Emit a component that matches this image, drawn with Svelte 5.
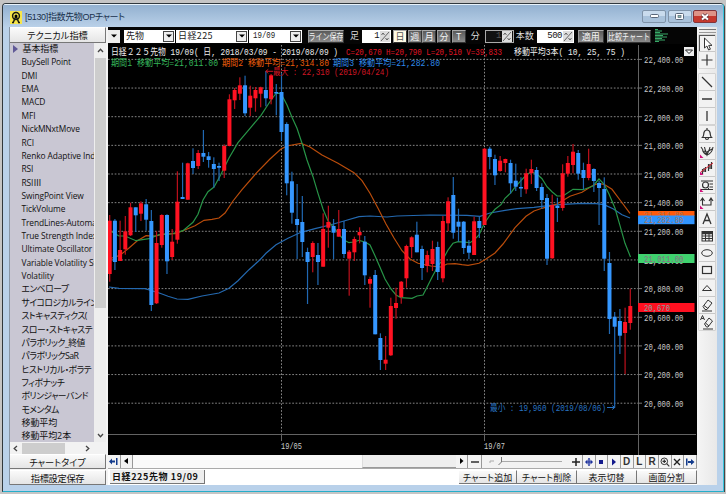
<script lang="ts">
    const indicators = [
        "基本指標", "BuySell Point", "DMI", "EMA", "MACD", "MFI", "NickMNxtMove", "RCI",
        "Renko Adaptive Index", "RSI", "RSIⅢ", "SwingPoint View", "TickVolume",
        "TrendLines-Automatic", "True Strength Index", "Ultimate Oscillator",
        "Variable Volatility Stop", "Volatility", "エンベロープ", "サイコロジカルライン",
        "ストキャスティクス(", "スロー・ストキャステ", "パラボリック_終値", "パラボリックSaR",
        "ヒストリカル・ボラテ", "フィボナッチ", "ボリンジャーバンド", "モメンタム", "移動平均", "移動平均2本"
    ];

    // r = up, b = down, then high, body top, body bottom, low
    const candleData = `r 215 220.7 274 281.7|b 219 220.7 262 270|r 220.7 250 261 261|r 216 231.3 249.3 254.7
|r 202.7 207.3 235.3 236|b 207.3 207.3 215.3 232|r 201.3 203.3 213.7 221|b 199 204.3 219.7 230.7
|b 210 221 305 311|r 231.3 243 303.3 304|r 214.3 215 245 247.7|b 214.3 215 261.3 274
|r 229 241.7 257 260|r 171.3 201.7 239.7 243.7|b 162.7 197 199 199|r 162.7 163.3 199.7 199.7
|b 148.3 161 168 174|r 150 153 166 169|b 130 153 156.7 162|b 152 156.3 160 167.7
|b 157.3 164 169 187.7|b 162.7 166 167.7 181|r 144.3 146 170.7 178|r 94.3 99.3 146 146.3
|r 88 90 100.3 109|r 77.3 85.3 93.7 100|b 75.7 85.3 113.3 116|r 85.7 95.7 107.7 116
|r 87 90 98.3 111.7|r 86.7 87.3 93.7 107.3|b 71 90 98.3 106.3|r 74 75.3 99.3 104.3
|b 84 92 92.7 115.3|b 73.3 92 132 141|b 122.3 124 183.3 195.3|b 171.7 181.3 212.7 223.7
|b 184 219 225 259|b 196 222 242 257|b 247.7 252 262 304|r 241.3 243 257 272.3
|b 243 255 262 285|r 213.3 229 266.7 266.7|r 205.7 222 227.7 247.7|b 219 226 232.7 259.3
|r 210 229 236.7 236.7|b 221 229 254 258|r 250 251.7 258.7 295.7|r 236.7 239 252.3 261
|r 227.3 232 235.3 243.3|b 236 241.7 275.3 285|r 276.7 279 283.7 307.7|b 270 275 334.3 334.3
|b 333.3 338 360 370|r 336 359.7 363.7 370|r 297.7 306 355.3 356|r 287.7 303 308 318.7
|r 281 281.7 297 303.7|r 244.7 246 278.3 287.7|r 236.3 237.3 247 258|b 221.7 234.7 252.3 252.3
|b 245.7 249 268 280|r 250.7 255 266 272.3|r 240.7 249 264 271|b 241.7 247 272 280
|r 216 221 278.3 282.3|r 197.3 201.3 223.3 231|b 177 195 232.7 238.7|b 208.7 221.7 226.7 241.7
|b 221 221.7 248 254|b 240 245.7 252.7 259|r 216.7 221.3 255 255|b 216.7 221 228 238
|r 148 148.7 225 225|b 146.7 148.7 157 169.3|b 154.7 159 175.3 185|r 156 160.7 171 171.7
|r 158.7 159 163 172.3|b 159.7 163 183.3 193.7|b 163.7 180.7 186.7 191|b 177.3 187 188 197
|r 168.7 173.3 189.3 193.7|r 159.7 169 173.3 184|b 167 170 188 191|b 183.3 187 200 208.7
|b 194 198 258.7 265|r 194.7 205 258.3 258.7|b 197.7 205.7 208 222|r 164.3 173.3 208 210.7
|r 156 163 173.7 176.7|r 144 151.7 165 173.3|b 150 153 173.7 179.7|b 162.7 170 178 189.3
|r 148.7 164 178 180.3|b 168.3 169 181 192|b 181 183 188 225|b 177.3 189 258.7 271
|b 252 263 319 334|b 312 316.7 326.7 407.7|b 309 321 335.7 354|r 307.7 322 333 374
|r 288.7 306 323 329.7`;

    const candles = candleData.split("|").map((row, i) => {
        const [dir, ...v] = row.trim().split(" ");
        const [high, top, bottom, low] = v.map(Number);
        return { dir, high, top, bottom, low, x: 109.7 + i * 5.206 };
    });

    const ma10 = "109,231 112,232 119,236 125,236 136,240.7 149,238.7 159,234.7 171,234 183,230.7 193,222.3 198,214.3 203,200 208,191.7 214,187 221,174.3 229,158 238,142.7 250,128.3 261,115.3 271,100 276,93.5 281,93.5 287,105 292,117.3 297,128.3 302,143.3 307,160 313,176.7 318,193.3 323,209 328,221 333,226.7 339,234.3 344,240 349,242.7 354,242 359,240.3 365,242 370,245 375,255.7 380,267.3 385,279 391,289 396,295 401,297.7 412,298.3 417,296 423,295 427,287.3 432,277.3 438,266 443,259.3 448,250 453,243.3 458,241.7 470,242.7 474,240 479,235 484,224 490,215 495,209.3 501,204.7 505,198.3 511,192.7 516,186 521,180.7 526,175.3 531,172 537,174 542,178.7 547,186.7 552,191.7 557,196 563,196 573,189.3 583,189.7 593,186 599,179 604,184 609,194 615,208.3 620,225.7 625,243.3 630.5,257";
    const ma25 = "109,259 120,255.3 129,248 137,241 146,235.7 156,236 164,234 175,233.7 183,230.7 195,225.7 204,220.3 212,219.3 219,218 225,213 233,201 242,189.7 257,172.3 270,159 281,149 287,146 301,143.3 310,147 322,155 338,163.3 354,172.7 362,180.7 370,193.3 378,208.3 386,224 394,238 402,250.7 410,259 418,263.3 431,266 441,267 447,264 455,263.7 462,264.7 468,265.3 479,263.3 486,259 495,253 503,244 515,227.7 526,216.3 534,211 542,208.3 557,204 570,196.3 582,192.3 592,186 598,183.5 604,184.3 612,189.3 620,200 630,213.3";
    const ma75 = "109,287 119,288.3 145,288.7 160,293.3 168,296.3 177,299 188,299.3 202,296 219,293 229,288.3 238,280.7 249,269.7 260,259.7 266,253.3 276,244.7 288,238.3 301,232.3 316,228.3 330,225 344,221 359,216.7 370,216 387,217 397,216 430,215 467,215.3 480,216.3 490,213 505,210.3 517,208.7 534,207.3 550,205.3 563,204.3 582,203.3 596,203.7 604,204.7 613,208.7 622,214.7 630,218";

    const prices = ["22,400.00", "22,200.00", "22,000.00", "21,800.00", "21,600.00", "21,400.00", "21,200.00", "21,000.00", "20,800.00", "20,600.00", "20,400.00", "20,200.00", "20,000.00"]
        .map((label, i) => ({ label, y: 59.4 + i * 28.65 }));

    const captions = [
        { x: 111, y: 54.5, w: 179 + 48, fill: "#eee", text: "日経２２５先物 19/09( 日, 2018/03/09 - 2019/08/09 )" },
        { x: 346, y: 54.5, w: 156, fill: "#e01525", text: "C=20,670 H=20,790 L=20,510 V=39,833" },
        { x: 514, y: 54.5, w: 111, fill: "#eee", text: "移動平均3本( 10, 25, 75 )" },
        { x: 111, y: 65.5, w: 107, fill: "#35b65b", text: "期間1 移動平均=21,011.00" },
        { x: 222, y: 65.5, w: 107, fill: "#e95c0b", text: "期間2 移動平均=21,314.80" },
        { x: 333, y: 65.5, w: 107, fill: "#2f8aea", text: "期間3 移動平均=21,282.80" },
        { x: 273, y: 74.5, w: 116, fill: "#d01624", text: "最大 : 22,310 (2019/04/24)" },
        { x: 490, y: 410.5, w: 116, fill: "#2873c2", text: "最小 : 19,960 (2019/08/06)" },
        { x: 281, y: 448.5, w: 21, fill: "#ccc", text: "19/05" },
        { x: 484, y: 448.5, w: 21, fill: "#ccc", text: "19/07" }
    ];

    const tools = ["cursor", "cross", "line", "hline", "vline", "bell", "fan", "trend", "search", "range", "text", "table", "ellipse", "rect", "triangle", "eraser", "eraseAll"];
    const navButtons = ["plus", "move", "stop", "play", "D", "L", "R", "zoom", "close", "end"];
    const periods = ["日", "週", "月", "分", "T"];
    const volumeBars = [3, 7, 5, 13, 8, 12, 7, 10, 4];

    let period = $state("日");
    let selected = $state("cursor");
</script>

{#snippet arrow()}
    <span class="arrow"><svg width="6" height="4"><path d="M0 .5h6l-3 3z" /></svg></span>
{/snippet}

{#snippet spin()}
    <span class="spin"><svg width="10" height="11"><path d="M1 10 9 1M1.5 4 3 2l1.5 2M5.500 7 7 9l1.500-2" fill="none" stroke="#444" stroke-width=".8" /></svg></span>
{/snippet}

<div class="window">
    <header class="titlebar">
        <svg class="logo" width="12" height="13" viewBox="0 0 12 13">
            <rect width="12" height="13" fill="#f7e64b" />
            <g fill="none" stroke="#1a1a10" stroke-width="1.5"><circle cx="6" cy="5" r="3.4" /><path d="M6 5 3 12M6 5l3 7M2 11.5h2M8 11.5h2" /></g>
            <circle cx="6" cy="5" r="1.5" />
        </svg>
        <span class="title">[5130]指数先物OPチャート</span>
        <span class="win-btn"><svg width="9" height="5"><rect x=".5" y=".5" width="8" height="3" rx="1" fill="#fff" stroke="#59677a" /></svg></span>
        <span class="win-btn"><svg width="9" height="8"><rect x=".5" y=".5" width="8" height="6" rx="1" fill="#fff" stroke="#59677a" /><rect x="3" y="2.5" width="3" height="2" fill="#8ba" stroke="#59677a" stroke-width=".7" /></svg></span>
        <span class="win-btn red"><svg width="10" height="8"><path d="M2 1.5 8 6.5M8 1.5 2 6.5" stroke="#5b3038" stroke-width="3.4" /><path d="M2 1.5 8 6.5M8 1.5 2 6.5" stroke="#fff" stroke-width="2" /></svg></span>
    </header>

    <div class="body">
        <aside class="side">
            <button class="flat head">テクニカル指標</button>
            <div class="list-wrap">
                <ul class="list">
                    {#each indicators as name, i}
                        <li class:first={i === 0} class:kana={i > 17 && i < 28} class:kanji={i === 0 || i > 27}>{name}</li>
                    {/each}
                </ul>
                <div class="vscroll">
                    <svg width="7" height="5"><path d="M1 4 3.5 1.2 6 4" /></svg>
                    <span class="vthumb"></span>
                    <svg class="down" width="7" height="5"><path d="M1 1 3.5 3.8 6 1" /></svg>
                </div>
            </div>
            <div class="hscroll">
                <svg width="5" height="7"><path d="M4 1 1.2 3.5 4 6" /></svg>
                <span class="hthumb"></span>
                <svg class="right" width="5" height="7"><path d="M1 1 3.8 3.5 1 6" /></svg>
            </div>
            <button class="flat">チャートタイプ</button>
            <button class="flat save">指標設定保存</button>
        </aside>

        <main class="main">
            <div class="toolbar">
                <span class="mini">{@render arrow()}</span>
                <span class="select market">先物{@render arrow()}</span>
                <span class="select symbol">日経225{@render arrow()}</span>
                <span class="select month"><i>19/09</i>{@render arrow()}</span>
                <button class="dark line-save"><i>ライン保存</i></button>
                <span class="label foot">足</span>
                <span class="number foot-num"><i>1</i>{@render spin()}</span>
                {#each periods as p}
                    <button class="dark period" class:on={period === p} onclick={() => (period = p)}>{p}</button>
                {/each}
                <span class="label minute">分</span>
                <span class="number disabled"><i>1</i>{@render spin()}</span>
                <span class="label count">本数</span>
                <span class="number count-num"><i>500</i>{@render spin()}</span>
                <button class="dark apply">適用</button>
                <button class="dark compare"><i>比較チャート</i></button>
                <svg class="bars" width="15" height="14">
                    {#each volumeBars as w, i}
                        <rect x="1" y={i * 1.5} width={w} height="1" fill="#38a968" />
                    {/each}
                </svg>
            </div>

            <svg class="chart" width="589" height="411" viewBox="108 44 589 411">
                <g class="grid">
                    {#each prices as p}
                        <path d="M108 {p.y}H638" />
                    {/each}
                    <path d="M281.5 45V434M484.5 45V434" />
                </g>
                <path d="M638.5 45V455M108 434.5H696M281.5 434v7M484.5 434v7" fill="none" stroke="#636363" />

                <g class="ma">
                    <polyline points={ma75} stroke="#2469b0" />
                    <polyline points={ma25} stroke="#b94c0b" />
                    <polyline points={ma10} stroke="#279447" />
                </g>

                {#each candles as c}
                    <g class={c.dir}>
                        <rect class="wick" x={c.x - 0.6} y={c.high} width="1.2" height={c.low - c.high} />
                        <rect x={c.x - 2} y={c.top} width="4" height={Math.max(c.bottom - c.top, 1.5)} />
                    </g>
                {/each}

                <g class="txt">
                    {#each captions as c}
                        <text x={c.x} y={c.y} textLength={c.w} lengthAdjust="spacingAndGlyphs" fill={c.fill}>{c.text}</text>
                    {/each}
                    {#each prices as p}
                        <path d="M638 {p.y}h4" stroke="#777" />
                        <text x="644" y={p.y + 3.8} textLength="39.5" lengthAdjust="spacingAndGlyphs" fill="#c8c8c8">{p.label}</text>
                    {/each}
                    <rect x="638" y="211" width="56.5" height="5" fill="#ff5a0a" />
                    <text x="644" y="218" textLength="39.5" lengthAdjust="spacingAndGlyphs" fill="#9c7258">21,314.80</text>
                    <rect x="638" y="215.5" width="56.5" height="8.7" fill="#3195ff" />
                    <text x="644" y="223.4" textLength="39.5" lengthAdjust="spacingAndGlyphs" fill="#a5745a">21,282.80</text>
                    <rect x="638" y="254" width="56.5" height="9" fill="#3fd16e" />
                    <text x="644" y="262" textLength="39.5" lengthAdjust="spacingAndGlyphs" fill="#8b6c86">21,011.00</text>
                    <rect x="638" y="303" width="56.5" height="9" fill="#ff1020" />
                    <text x="644" y="311" textLength="26" lengthAdjust="spacingAndGlyphs" fill="#7fa0a0">20,670</text>
                </g>
                <path d="M273 71.3h-7m2.3-2-2.5 2 2.5 2" fill="none" stroke="#c81422" />
                <path d="M607 407.5h7.5m-2.3-2 2.5 2-2.5 2" fill="none" stroke="#2873c2" />
                <rect x="684" y="47" width="10" height="9" fill="#eee" />
                <path d="M685.5 50h7l-3.500 3.500z" fill="#fff" stroke="#222" />
            </svg>

            <div class="nav">
                <span class="cell"><svg width="9" height="9"><path d="M0 4.5 3 1.5v2h3v2H3v2zM7 1h1.5v7H7z" fill="#123a8c" /></svg></span>
                <span class="cell"><svg width="5" height="7"><path d="M4 0v6L0 3z" /></svg></span>
                <span class="track"><span class="thumb"></span></span>
                <span class="cell"><svg width="5" height="7"><path d="M1 0v6l3.500-3z" /></svg></span>
                <span class="cell minus"><svg width="8" height="8"><path d="M0 4h8" stroke="#222" stroke-width="1.4" /></svg></span>
                <span class="slider"><svg width="88" height="12"><path d="M8 8v-2h4M20 6.500h60" fill="none" stroke="#aaa" /><path d="M19.500 2v5l-3 3" fill="none" stroke="#777" /></svg></span>
                {#each navButtons as b}
                    <span class="cell nb">
                        {#if b.length === 1}
                            {b}
                        {:else}
                            <svg width="10" height="10" viewBox="0 0 10 10">
                                {#if b === "plus"}<path d="M1 5h8M5 1v8" stroke="#222" stroke-width="1.5" />
                                {:else if b === "move"}<path d="M5 1v8" stroke="#1a2f9c" stroke-width="1.4" /><path d="M1 5l2.500-2.500v2h3v-2L9 5 6.500 7.500v-2h-3v2z" fill="#1a2f9c" />
                                {:else if b === "stop"}<rect x="3" y="3" width="4" height="4" fill="#131a8c" />
                                {:else if b === "play"}<path d="M3 1.500v7L7 5z" fill="#131a8c" />
                                {:else if b === "zoom"}<circle cx="4.300" cy="4.300" r="3.300" fill="none" stroke="#333" /><path d="M2.500 4.300H6M4.300 2.500V6M6.700 6.700 9.300 9.300" stroke="#333" stroke-width="1.2" />
                                {:else if b === "close"}<path d="M2 2l6 6M8 2 2 8" stroke="#222" stroke-width="1.4" />
                                {:else}<path d="M1 1.500h1.500v7H1zM3 4h3V2l3.500 3L6 8V6H3z" fill="#123a8c" />{/if}
                            </svg>
                        {/if}
                    </span>
                {/each}
            </div>

            <div class="tabs">
                <span class="tab">日経225先物 19/09</span>
                <button class="flat add">チャート追加</button>
                <button class="flat">チャート削除</button>
                <button class="flat">表示切替</button>
                <button class="flat">画面分割</button>
            </div>
        </main>

        <nav class="tools">
            {#each tools as t}
                <button class="tool" class:active={selected === t} class:gap={t === "line"} aria-label={t} onclick={() => (selected = t)}>
                    <svg width="16" height="16" viewBox="0 0 16 16" fill="none" stroke="#333">
                        {#if t === "cursor"}<path d="M4.500 2v10l2.400-2 1.700 4 1.800-.8-1.700-3.800H12z" fill="#fff" />
                        {:else if t === "cross"}<path d="M2.500 8h11M8 2.500v11" stroke-width="1.2" />
                        {:else if t === "line"}<path d="M3 3l10 10" stroke-width="1.2" />
                        {:else if t === "hline"}<path d="M3 8h10" stroke-width="1.3" />
                        {:else if t === "vline"}<path d="M8 3v10" stroke-width="1.3" />
                        {:else if t === "bell"}<path d="M3.500 11.500h9c-1.500-1.500-1-3-1.500-5C10.500 4.500 9.500 4 8 4s-2.500.5-3 2.500c-.5 2 0 3.500-1.500 5zM6.500 12c0 2 3 2 3 0M8 4V2" stroke-width="1.2" />
                        {:else if t === "fan"}<path d="M2 4l2 3M14 4c-.5 4-3 7-6 8-2-1-4-3-4.500-5M5.500 4c.5 3 1.500 5 2.500 8 1-3 2.500-5 3-8M5 8l3 1 5-3" stroke-width="1.1" />
                        {:else if t === "trend"}<path d="M3.500 9v5M6.500 7v5M9.500 4v7M12.500 2v7M5 8v4M11 4v5" stroke-width="1.2" /><path d="M2 12 14 3" stroke="#d23" />
                        {:else if t === "search"}<path d="M2 4h12M2 12.500h12M10.500 7H14M10.500 10H14" /><circle cx="6.500" cy="8" r="3" stroke-width="1.2" /><path d="M8 10l2 2" />
                        {:else if t === "range"}<path d="M3.500 5v6H12V5M1.500 7l2-3 2 3M10 7l2-3 2 3" stroke-width="1.1" />
                        {:else if t === "text"}<path d="M4 13 8 3l4 10M5.500 9.500h5" stroke-width="1.3" />
                        {:else if t === "table"}<rect x="3" y="3.500" width="10.500" height="9.500" /><path d="M3 5h10.500" stroke-width="2.5" /><path d="M3 8h10.500M3 10.500h10.500M6.500 4v9M10 4v9" />
                        {:else if t === "ellipse"}<ellipse cx="8" cy="8" rx="5.300" ry="3.300" />
                        {:else if t === "rect"}<rect x="3.500" y="4.500" width="9" height="7" stroke-width="1.2" />
                        {:else if t === "triangle"}<path d="M3.500 10.500h9L8 5.500z" />
                        {:else if t === "eraser"}<path d="M4 9.500 9 3l4 3-5 6.500H6zM5 8.500l4 3M3 14h10" />
                        {:else}<path d="M5.500 10 10 4l3.500 3L9 13H7.500zM6.500 9l3.500 3M4 15h10" /><path d="M1.500 6 3.500 1.500 5.500 6M2.300 4.500h2.500" />{/if}
                        {#if ["fan", "trend", "search", "range"].includes(t)}<path d="M1 11.500V15h3.500z" fill="#d1127a" stroke="none" />{/if}
                    </svg>
                </button>
            {/each}
        </nav>
    </div>
</div>

<style>
    :global(body) {
        background: #c5c5c5;
    }

    .window {
        box-sizing: border-box;
        width: 722px;
        height: 489px;
        margin: 3px 0 0 2px;
        border: 1px solid #30383d;
        border-right-color: #35c4dd;
        border-bottom-color: #25aeca;
        border-radius: 4px 4px 0 0;
        background: #b9d1ea;
        box-shadow: 1px 1px #454545;
        overflow: hidden;
        font: 9px/1 "Liberation Sans", "Noto Sans CJK JP", sans-serif;
        color: #111;
    }

    :global(#app) {
        display: flow-root;
    }

    button {
        padding: 0;
        margin: 0;
        border: 0;
        font: inherit;
        white-space: nowrap;
        overflow: hidden;
    }

    i {
        font-style: normal;
    }

    .titlebar {
        display: flex;
        align-items: flex-start;
        height: 23px;
        box-sizing: border-box;
        padding: 6px 6px 0 7px;
        border-top: 1px solid #e8f2fa;
        background: linear-gradient(#93b1d0, #b9d0e8);
    }

    .title {
        flex: 1;
        margin-left: 3px;
        font: 9px/12px "Liberation Sans", "Noto Sans CJK JP", sans-serif;
        font-feature-settings: "palt";
        letter-spacing: -0.35px;
        color: #18304c;
    }

    .win-btn {
        display: flex;
        align-items: center;
        justify-content: center;
        box-sizing: border-box;
        width: 24px;
        height: 13px;
        margin: -1px 0 0 1.5px;
        border: 1px solid #7f93a9;
        border-radius: 2px;
        background: linear-gradient(#c9dbed 45%, #a9c2db 50%);
    }

    .win-btn.red {
        border-color: #81343a;
        background: linear-gradient(#de9387 45%, #c5382d 50%);
    }

    .body {
        display: flex;
        width: 708px;
        height: 458px;
        margin-left: 6px;
        background: #f4f4f4;
    }

    .side {
        display: flex;
        flex-direction: column;
        width: 97px;
        border-left: 1px solid #8795a5;
        box-sizing: border-box;
        background: #f2f2f2;
    }

    .flat {
        height: 15px;
        border-right: 1px solid #777;
        border-bottom: 1px solid #777;
        border-top: 1px solid #fff;
        background: linear-gradient(#fafafa, #e5e5e5);
        font: 9.2px/12px "Noto Sans CJK JP", sans-serif;
        font-feature-settings: "palt";
        color: #111;
    }

    .head {
        flex: none;
        height: 16px;
    }

    .save {
        margin-top: 1px;
        letter-spacing: -0.3px;
    }

    .list-wrap {
        display: flex;
        height: 399px;
    }

    .list {
        width: 84px;
        margin: 0;
        padding: 0 0 0 11.5px;
        box-sizing: border-box;
        overflow: hidden;
        list-style: none;
        background: #c9c7d3;
    }

    .list li {
        height: 13.36px;
        font: 8.4px/12px "Open Sans", "Noto Sans CJK JP", sans-serif;
        letter-spacing: -0.1px;
        white-space: nowrap;
    }

    .list li.kana {
        font-size: 8.8px;
        font-feature-settings: "palt";
        letter-spacing: -0.5px;
    }

    .list li.kanji {
        font-size: 9px;
    }

    .list li.first::before {
        content: "";
        display: inline-block;
        margin: 0 5px 0 -9px;
        border: 4px solid transparent;
        border-right: 0;
        border-left: 5px solid #605997;
        vertical-align: -1px;
    }

    .vscroll {
        display: flex;
        flex-direction: column;
        align-items: center;
        width: 12px;
        padding-top: 5px;
        box-sizing: border-box;
        background: #eee;
    }

    .vscroll svg, .hscroll svg {
        flex: none;
        fill: none;
        stroke: #444;
        stroke-width: 1.3;
    }

    .vthumb {
        width: 11px;
        height: 250px;
        margin-top: 5px;
        background: #cdcdcd;
    }

    .down {
        margin: auto 0 4px;
    }

    .hscroll {
        display: flex;
        align-items: center;
        height: 12px;
        padding: 0 16px 0 3px;
    }

    .hthumb {
        width: 43px;
        height: 11px;
        margin-left: 4px;
        background: #cdcdcd;
    }

    .right {
        margin-left: auto;
    }

    .main {
        width: 589px;
        margin-left: 2px;
        background: #fff;
    }

    .toolbar {
        display: flex;
        align-items: center;
        height: 17px;
        padding-top: 1px;
        box-sizing: border-box;
        overflow: hidden;
        background: #050505;
        font: 9px/12px "Noto Sans CJK JP", sans-serif;
    }

    .toolbar > * {
        flex: none;
        box-sizing: border-box;
    }

    .arrow {
        display: flex;
        align-items: center;
        justify-content: center;
        width: 11px;
        height: 11px;
        margin-left: auto;
        border: 1px solid #444;
        box-sizing: border-box;
        background: #eee;
    }

    .mini {
        display: flex;
        align-items: center;
        width: 12px;
        height: 13px;
        padding: 0 1px;
        background: #eee;
    }

    .mini .arrow {
        border: 0;
        width: 10px;
    }

    .select {
        display: flex;
        align-items: center;
        height: 13px;
        padding: 0 1px 0 2px;
        background: #fff;
        color: #222;
    }

    .market {
        width: 51px;
        margin-left: 4px;
    }

    .symbol {
        width: 72px;
        margin-left: 1px;
        letter-spacing: 0.4px;
    }

    .month {
        width: 53px;
        margin-left: 1px;
        padding-left: 4px;
        font: 9.5px/12px "Liberation Mono", monospace;
    }

    .month i {
        transform: scaleX(0.78);
        transform-origin: left;
    }

    .dark {
        height: 13px;
        border: 1px solid #333;
        border-top-color: #aaa;
        border-left-color: #999;
        background: linear-gradient(#5a5a5a, #8a8a8a);
        color: #f4f4f4;
        line-height: 11px;
    }

    .dark i {
        display: block;
        transform: scaleX(0.78);
        margin: 0 -12px;
    }

    .line-save {
        width: 36px;
        margin-left: 6px;
    }

    .label {
        color: #ddd;
    }

    .foot {
        width: 12px;
        margin-left: 6px;
    }

    .number {
        display: flex;
        align-items: center;
        justify-content: flex-end;
        height: 13px;
        padding-right: 1px;
        background: #fff;
        font: 9px/12px "Liberation Mono", monospace;
        letter-spacing: -0.6px;
        color: #111;
    }

    .spin {
        display: flex;
        width: 10px;
        height: 11px;
        margin-left: 1px;
        background: #ddd;
    }

    .foot-num {
        width: 29px;
    }

    .period {
        width: 14px;
        margin-left: 0.7px;
    }

    .foot-num + .period {
        margin-left: 2px;
    }

    .period.on {
        background: #fffbe6;
        color: #555;
    }

    .minute {
        width: 10px;
        margin-left: 5px;
    }

    .disabled {
        width: 29px;
        margin-left: 4px;
        border: 1px solid #aaa;
        background: #111;
        color: #555;
    }

    .count {
        width: 19px;
        margin-left: 2px;
    }

    .count-num {
        width: 37px;
        margin-left: 2px;
    }

    .apply {
        width: 26px;
        margin-left: 4px;
    }

    .compare {
        width: 44px;
        margin-left: 3px;
    }

    .bars {
        margin-left: 3px;
    }

    .chart {
        display: block;
        background: #000;
    }

    .grid {
        fill: none;
        stroke: #858585;
        stroke-dasharray: 1.7 1.65;
    }

    .ma {
        fill: none;
        stroke-width: 1.2;
    }

    .r {
        fill: #ff1222;
    }

    .r .wick {
        fill: #bd101c;
    }

    .b {
        fill: #3597ff;
    }

    .b .wick {
        fill: #2068b2;
    }

    .txt {
        font: 9.5px "Liberation Mono", "Noto Sans CJK JP", monospace;
    }

    .nav {
        display: flex;
        height: 14px;
        border-bottom: 1px solid #aaa;
        box-sizing: border-box;
        background: #f2f2f2;
    }

    .cell {
        flex: none;
        display: flex;
        align-items: center;
        justify-content: center;
        box-sizing: border-box;
        width: 12.5px;
        border-right: 1px solid #999;
        background: #f3f3f3;
    }

    .track {
        flex: 1;
        display: flex;
        justify-content: flex-end;
        background: #fafafa;
    }

    .thumb {
        width: 93px;
        border-left: 1px solid #ddd;
        border-bottom: 1px solid #999;
        background: #eee;
    }

    .minus {
        width: 14px;
    }

    .slider {
        width: 88px;
    }

    .nb {
        width: 12.7px;
        font: bold 10px "Liberation Sans", sans-serif;
        color: #333;
    }

    .tabs {
        display: flex;
        align-items: center;
        height: 16px;
    }

    .tabs .flat {
        width: 60px;
        height: 14px;
        line-height: 11px;
        font-size: 9px;
    }

    .tabs .add {
        margin-left: auto;
        width: 58px;
    }

    .tab {
        height: 14px;
        width: 95px;
        margin-left: 2px;
        padding-left: 2px;
        box-sizing: border-box;
        border-right: 1px solid #777;
        border-bottom: 1px solid #777;
        background: #eee;
        font: bold 9px/13px "Noto Sans CJK JP", sans-serif;
        letter-spacing: 0.6px;
        white-space: nowrap;
    }

    .tools {
        display: flex;
        flex-direction: column;
        align-items: center;
        flex: 1;
        padding-top: 6px;
        background: linear-gradient(90deg, #f5f5f5, #e8e8e8);
    }

    .tools::before {
        content: "";
        width: 17px;
        height: 2px;
        margin: -4px 0 2px;
        border-top: 1px solid #777;
        border-bottom: 1px solid #999;
    }

    .tool {
        flex: none;
        width: 16px;
        height: 16px;
        margin-bottom: 1.12px;
        background: #f2f2f2;
        box-shadow: 0 0 0 0.5px #bbb;
    }

    .tool.active {
        border-left: 1px solid #555;
        border-top: 1px solid #555;
    }

    .tool.gap {
        margin-top: 5px;
    }
</style>
